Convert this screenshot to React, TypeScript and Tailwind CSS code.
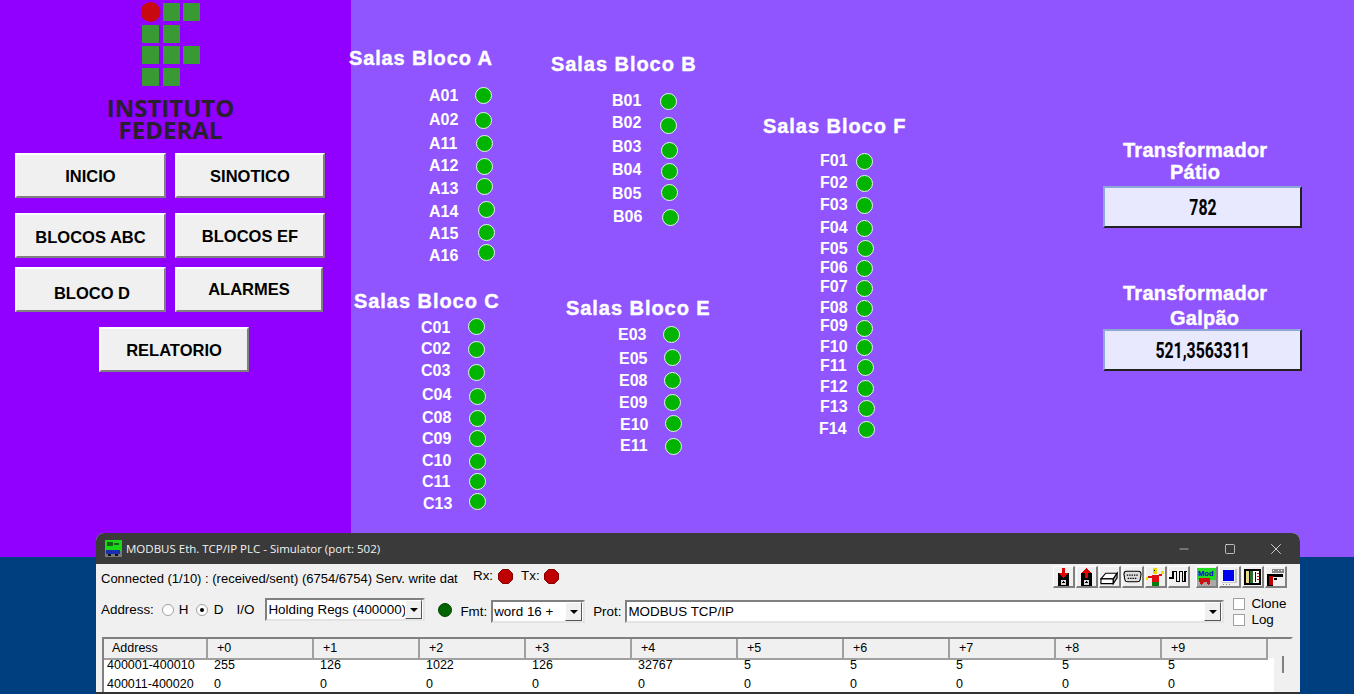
import { Minus, Square, X } from 'lucide-react'

type Row = [string, number, number, number, number]

const titles: [string, number, number, string][] = [
    ['Salas Bloco A', 349, 58, 'tracking-[0.85px]'],
    ['Salas Bloco B', 551, 64, 'tracking-[0.95px]'],
    ['Salas Bloco C', 354, 301, 'tracking-[0.95px]'],
    ['Salas Bloco E', 566, 308, 'tracking-[0.95px]'],
    ['Salas Bloco F', 763, 126, 'tracking-[0.95px]'],
    ['Transformador', 1123, 150, 'tracking-[0.25px]'],
    ['Pátio', 1170, 172, 'tracking-[0.25px]'],
    ['Transformador', 1123, 293, 'tracking-[0.25px]'],
    ['Galpão', 1170, 318, 'tracking-[0.25px]'],
]

// label x, label y, led x, led y
const rooms: Row[] = [
    ['A01', 429, 95, 483, 95],
    ['A02', 429, 119, 483, 120],
    ['A11', 429, 143, 484, 143],
    ['A12', 429, 165, 484, 166],
    ['A13', 429, 188, 484, 186],
    ['A14', 429, 211, 486, 209],
    ['A15', 429, 233, 486, 232],
    ['A16', 429, 255, 486, 252],
    ['B01', 612, 100, 668, 101],
    ['B02', 612, 122, 668, 125],
    ['B03', 612, 146, 669, 150],
    ['B04', 612, 169, 669, 171],
    ['B05', 612, 193, 669, 192],
    ['B06', 613, 216, 670, 217],
    ['C01', 421, 327, 476, 326],
    ['C02', 421, 348, 476, 349],
    ['C03', 421, 370, 476, 372],
    ['C04', 422, 394, 477, 396],
    ['C08', 422, 417, 477, 418],
    ['C09', 422, 438, 477, 438],
    ['C10', 422, 460, 477, 461],
    ['C11', 422, 481, 477, 481],
    ['C13', 423, 503, 477, 501],
    ['E03', 618, 334, 671, 334],
    ['E05', 619, 358, 672, 357],
    ['E08', 619, 380, 672, 380],
    ['E09', 619, 402, 672, 402],
    ['E10', 620, 424, 673, 423],
    ['E11', 620, 445, 673, 446],
    ['F01', 820, 160, 864, 161],
    ['F02', 820, 182, 864, 183],
    ['F03', 820, 204, 864, 205],
    ['F04', 820, 227, 864, 228],
    ['F05', 820, 248, 865, 248],
    ['F06', 820, 267, 864, 268],
    ['F07', 820, 286, 864, 288],
    ['F08', 820, 307, 864, 308],
    ['F09', 820, 325, 864, 328],
    ['F10', 820, 346, 864, 347],
    ['F11', 820, 365, 865, 367],
    ['F12', 820, 386, 865, 388],
    ['F13', 820, 406, 866, 408],
    ['F14', 819, 428, 866, 429],
]

const tableRows = [
    ['400001-400010', '255', '126', '1022', '126', '32767', '5', '5', '5', '5', '5'],
    ['400011-400020', '0', '0', '0', '0', '0', '0', '0', '0', '0', '0'],
]

function NavButton({ label, className }: { label: string; className: string }) {
    return (
        <button className={`h-[45px] shrink-0 bg-[#f0f0f0] border-2 border-t-white border-l-white border-r-[#808080] border-b-[#808080] font-['Liberation_Sans',Arial,sans-serif] text-[16.5px] font-bold text-black flex items-center justify-center ${className}`}>
            {label}
        </button>
    )
}

function Logo() {
    return (
        <svg width="60" height="87" viewBox="0 0 60 87" className="ml-[141px] shrink-0">
            <g fill="#399a33">
                <rect x="22" y="3" width="17" height="18" rx="1" />
                <rect x="42" y="3" width="17" height="18" rx="1" />
                <rect x="1" y="25" width="17" height="18" rx="1" />
                <rect x="22" y="25" width="17" height="18" rx="1" />
                <rect x="1" y="46" width="17" height="18" rx="1" />
                <rect x="22" y="46" width="17" height="18" rx="1" />
                <rect x="42" y="46" width="17" height="18" rx="1" />
                <rect x="1" y="68" width="17" height="18" rx="1" />
                <rect x="22" y="68" width="17" height="18" rx="1" />
            </g>
            <circle cx="9.5" cy="12" r="10" fill="#c8090f" />
        </svg>
    )
}

function Sidebar() {
    return (
        <aside className="w-[351px] shrink-0 bg-[#9100ff] flex flex-col">
            <Logo />
            <div className="mt-[10px] w-[341px] h-[44px] text-center font-['Open_Sans',sans-serif] font-bold text-[24px] leading-[22px] text-[#2a1f2e]">
                INSTITUTO<br />FEDERAL
            </div>
            <div className="mt-[12px] pl-[15px] flex gap-[9px]">
                <NavButton label="INICIO" className="w-[151px] pt-[2px]" />
                <NavButton label="SINOTICO" className="w-[150px] pt-[2px]" />
            </div>
            <div className="mt-[15px] pl-[15px] flex gap-[9px]">
                <NavButton label="BLOCOS ABC" className="w-[151px] pt-[4px]" />
                <NavButton label="BLOCOS EF" className="w-[150px] pt-[2px]" />
            </div>
            <div className="mt-[9px] pl-[15px] flex gap-[9px]">
                <NavButton label="BLOCO D" className="w-[151px] pt-[8px] pl-[3px]" />
                <NavButton label="ALARMES" className="w-[148px]" />
            </div>
            <div className="mt-[15px] pl-[99px] flex">
                <NavButton label="RELATORIO" className="w-[150px] pt-[2px]" />
            </div>
        </aside>
    )
}

function ValueBox({ value, className }: { value: string; className: string }) {
    return (
        <div className={`absolute left-[752px] w-[199px] h-[42px] bg-[#e8e8ff] border-2 border-t-[#8ea6d8] border-l-[#8ea6d8] border-r-[#222] border-b-[#222] flex items-center justify-center ${className}`}>
            <span className="font-['Roboto',sans-serif] font-bold text-[22px] leading-[26px] pt-[1px] text-black scale-x-[0.72]">{value}</span>
        </div>
    )
}

function Canvas() {
    return (
        <main className="relative flex-1 bg-[#9155ff] font-['Liberation_Sans',Arial,sans-serif] font-bold text-white">
            {titles.map(([text, x, y, track]) => (
                <span
                    key={text + y}
                    className={`absolute text-[20px] leading-[24px] whitespace-nowrap [-webkit-text-stroke:0.4px_white] ${track}`}
                    style={{ left: x - 351, top: y - 12 }}
                >
                    {text}
                </span>
            ))}
            {rooms.map(([name, lx, ly, dx, dy]) => (
                <div key={name}>
                    <span className="absolute text-[16px] leading-[18px]" style={{ left: lx - 351, top: ly - 8 }}>
                        {name}
                    </span>
                    <span
                        className="absolute w-[17px] h-[17px] rounded-full bg-[#00b400] border border-[#e6f5e6]"
                        style={{ left: dx - 351 - 8, top: dy - 8 }}
                    />
                </div>
            ))}
            <ValueBox value="782" className="top-[186px]" />
            <ValueBox value="521,3563311" className="top-[329px]" />
        </main>
    )
}

function ToolIcon({ n }: { n: number }) {
    const common = { width: 20, height: 18, viewBox: '0 0 20 18', shapeRendering: 'crispEdges' as const }
    if (n === 0 || n === 1) {
        return (
            <svg {...common}>
                <path d="M4 5h12v13H4z" fill="#000" />
                <path d="M7 12h6v5H7z" fill="#ddd" />
                <circle cx="10" cy="14.5" r="1.2" fill="#000" />
                {n === 0 ? (
                    <path d="M8 0h4v5h3l-5 5-5-5h3z" fill="#e00000" />
                ) : (
                    <path d="M10 0l5 5h-3v5H8V5H5z" fill="#e00000" />
                )}
            </svg>
        )
    }
    if (n === 2) {
        return (
            <svg {...common} shapeRendering="auto">
                <path d="M1 11l5-6h12l-4 6z" fill="#fff" stroke="#000" strokeWidth="1.2" />
                <path d="M1 11h13v5H1z" fill="#fff" stroke="#000" strokeWidth="1.2" />
                <path d="M14 11l4-6v5l-4 6z" fill="#aaa" stroke="#000" strokeWidth="1.2" />
            </svg>
        )
    }
    if (n === 3) {
        return (
            <svg {...common} shapeRendering="auto">
                <path d="M1 6q0-3 3-3h12q3 0 3 3l-1 6q-.5 2-3 2H5q-2.500 0-3-2z" fill="#ddd" stroke="#000" strokeWidth="1.1" />
                <path d="M4 7h12M5 10.500h10" stroke="#000" strokeWidth="1.200" strokeDasharray="1.500 1" />
            </svg>
        )
    }
    if (n === 4) {
        return (
            <svg {...common}>
                <path d="M7 0h5v6H7z" fill="#e8d800" />
                <path d="M8 2h1v1H8zM10 2h1v1h-1z" fill="#000" />
                <path d="M6 7h8v7H6z" fill="#e01010" />
                <path d="M2 8h4v2H2zM14 6h3v2h-3z" fill="#e01010" />
                <path d="M0 9h2v3H0zM16 3h3v3h-3z" fill="#f0e000" />
                <path d="M6 14h8v4H6z" fill="#0a7a0a" />
            </svg>
        )
    }
    if (n === 5) {
        return (
            <svg {...common}>
                <path d="M0 10h4V3h4v11h3V3h3v11h3V3h2" fill="none" stroke="#000" strokeWidth="1.500" />
            </svg>
        )
    }
    if (n === 6) {
        return (
            <svg {...common}>
                <path d="M0 0h20v12H0z" fill="#22dd22" />
                <path d="M0 12h20v6H0z" fill="#aaa" />
                <text x="1" y="8" fontSize="8" fontWeight="700" fill="#0000d0" fontFamily="Liberation Sans">Mod</text>
                <path d="M2 10h12v4H2z" fill="#d01010" />
                <circle cx="5" cy="15" r="2" fill="#d01010" />
                <circle cx="12" cy="15" r="2" fill="#d01010" />
            </svg>
        )
    }
    if (n === 7) {
        return (
            <svg {...common}>
                <path d="M3 2h12v11H3z" fill="#0000f0" />
                <path d="M16 1h2v13h-2zM2 14h16v1H2z" fill="#c8c8c8" />
                <path d="M3 16h1v1H3zM6 16h1v1H6zM9 16h1v1H9z" fill="#888" />
            </svg>
        )
    }
    if (n === 8) {
        return (
            <svg {...common}>
                <path d="M1 1h18v16H1z" fill="#000" />
                <path d="M3 3h3v12H3z" fill="#e8d890" />
                <path d="M7 3h3v12H7z" fill="#2f6b2f" />
                <path d="M11 3h6v12h-6z" fill="#fff" />
                <path d="M13 4v10" stroke="#000" />
                <path d="M15 5h2v1h-2zM15 8h2v1h-2zM15 11h2v1h-2z" fill="#e01010" />
            </svg>
        )
    }
    return (
        <svg {...common}>
            <path d="M6 1h13v4H6z" fill="#888" />
            <path d="M7 2h1v1H7zM10 2h1v1h-1zM13 2h1v1h-1zM16 2h1v1h-1z" fill="#fff" />
            <path d="M1 6h17v3H7v9H1z" fill="#000" />
            <path d="M3 8h4v9H3z" fill="#c00000" />
            <path d="M8 10h4v2H8z" fill="#000" />
        </svg>
    )
}

function ToolButton({ n }: { n: number }) {
    return (
        <div className="w-[22px] h-[22px] bg-[#f0f0f0] border border-t-white border-l-white border-r-[#808080] border-b-[#808080] border-b-2 border-r-2 flex items-center justify-center overflow-hidden">
            <ToolIcon n={n} />
        </div>
    )
}

function DropArrow() {
    return (
        <div className="w-[17px] shrink-0 self-stretch bg-[#f0f0f0] border border-t-white border-l-white border-r-[#555] border-b-[#555] flex items-center justify-center">
            <div className="w-0 h-0 border-x-[4px] border-x-transparent border-t-[4px] border-t-black" />
        </div>
    )
}

function Select({ value, className }: { value: string; className: string }) {
    return (
        <div className={`flex h-[23px] bg-white border-2 border-t-[#808080] border-l-[#808080] border-r-[#e4e4e4] border-b-[#e4e4e4] pr-[1px] ${className}`}>
            <span className="flex-1 min-w-0 px-[1px] leading-[19px] whitespace-nowrap overflow-hidden">{value}</span>
            <DropArrow />
        </div>
    )
}

function Radio({ checked }: { checked?: boolean }) {
    return (
        <span className="w-[12px] h-[12px] rounded-full bg-white border border-[#a0a0a0] flex items-center justify-center">
            {checked && <span className="w-[4px] h-[4px] rounded-full bg-black" />}
        </span>
    )
}

function Octagon() {
    return (
        <svg width="15" height="15" viewBox="0 0 15 15" className="block">
            <path d="M4.500 0.500h6l4 4v6l-4 4h-6l-4-4v-6z" fill="#c00000" stroke="#800000" />
        </svg>
    )
}

function SimulatorWindow() {
    return (
        <section className="absolute left-[96px] top-[533px] w-[1204px] h-[161px] rounded-t-[8px] overflow-hidden flex flex-col bg-[#f0f0f0] border-b-2 border-[#333] font-['Liberation_Sans',Arial,sans-serif] text-[13.4px] text-black">
            <header className="h-[31px] shrink-0 bg-[#3a3a3a] flex items-center text-white">
                <svg width="17" height="17" viewBox="0 0 17 17" className="ml-[9px]" shapeRendering="crispEdges">
                    <path d="M0 0h17v11H0z" fill="#18d818" />
                    <path d="M0 11h17v6H0z" fill="#777" />
                    <path d="M2 2h6v4H2zM9 3h5v2H9z" fill="#156015" />
                    <path d="M1 10h14v4H1z" fill="#1830b0" />
                    <path d="M3 14h3v2H3zM10 14h3v2h-3z" fill="#111" />
                </svg>
                <span className="ml-[4px] font-['Open_Sans',sans-serif] text-[11.5px] leading-none text-[#f2f2f2]">MODBUS Eth. TCP/IP PLC - Simulator (port: 502)</span>
                <div className="ml-auto flex items-center pr-[1px] text-white">
                    <span className="w-[46px] flex justify-center"><Minus size={14} strokeWidth={1} /></span>
                    <span className="w-[46px] flex justify-center"><Square size={12} strokeWidth={1.300} /></span>
                    <span className="w-[46px] flex justify-center"><X size={18} strokeWidth={1} /></span>
                </div>
            </header>

            <div className="h-[26px] shrink-0 flex items-center pl-[5px] pr-[13px]">
                <span className="whitespace-nowrap w-[372px] text-[13px] pt-[3px]">Connected (1/10) : (received/sent) (6754/6754) Serv. write dat</span>
                <span className="-mt-[2px]">Rx:</span>
                <span className="ml-[5px] -mt-[2px]"><Octagon /></span>
                <span className="ml-[8px] -mt-[2px]">Tx:</span>
                <span className="ml-[4px] -mt-[2px]"><Octagon /></span>
                <div className="ml-auto flex">
                    <div className="flex gap-[1px]">
                        {[0, 1, 2, 3, 4, 5].map((n) => <ToolButton key={n} n={n} />)}
                    </div>
                    <div className="ml-[6px] flex gap-[1px]">
                        {[6, 7, 8, 9].map((n) => <ToolButton key={n} n={n} />)}
                    </div>
                </div>
            </div>

            <div className="h-[47px] shrink-0 flex items-start pt-[8px] pl-[5px] relative">
                <span className="leading-[23px]">Address:</span>
                <span className="ml-[8px] mt-[6px]"><Radio /></span>
                <span className="ml-[1px] w-[21px] pl-[4px] leading-[23px]">H</span>
                <span className="mt-[6px]"><Radio checked /></span>
                <span className="ml-[6px] leading-[23px]">D</span>
                <span className="ml-[13px] leading-[23px]">I/O</span>
                <Select value="Holding Regs (400000)" className="ml-[11px] w-[160px]" />
                <span className="ml-[13px] mt-[5px] w-[14px] h-[14px] rounded-full bg-[#006400] border border-[#004400]" />
                <span className="ml-[8px] leading-[23px] mt-[2px]">Fmt:</span>
                <Select value="word 16 +" className="ml-[4px] w-[94px] mt-[2px]" />
                <span className="ml-[8px] leading-[23px] mt-[2px]">Prot:</span>
                <Select value="MODBUS TCP/IP" className="ml-[4px] w-[599px] mt-[2px]" />
                <div className="ml-[9px] flex flex-col gap-[4px]">
                    <label className="flex items-center gap-[6px] leading-[12px]"><span className="w-[12px] h-[12px] bg-white border border-[#a0a0a0]" />Clone</label>
                    <label className="flex items-center gap-[6px] leading-[12px]"><span className="w-[12px] h-[12px] bg-white border border-[#a0a0a0]" />Log</label>
                </div>
            </div>

            <div className="ml-[6px] mr-[7px] flex-1 min-h-0 bg-white border-2 border-b-0 border-t-[#808080] border-l-[#808080] border-r-[#f0f0f0] flex overflow-hidden text-[12.5px]">
                <div className="flex-1 min-w-0">
                    <div className="h-[19px] grid grid-cols-[104px_repeat(10,106px)] bg-[#f0f0f0]">
                        <div className="border-r-2 border-b-2 border-[#a0a0a0] pl-[8px] leading-[19px]">Address</div>
                        {[0, 1, 2, 3, 4, 5, 6, 7, 8, 9].map((n) => (
                            <div key={n} className="border-r-2 border-b-2 border-[#a0a0a0] pl-[9px] leading-[19px]">+{n}</div>
                        ))}
                    </div>
                    {tableRows.map((row) => (
                        <div key={row[0]} className="h-[19px] grid grid-cols-[104px_repeat(10,106px)] leading-[15px]">
                            {row.map((cell, i) => (
                                <span key={i} className={i === 0 ? 'pl-[3px]' : 'pl-[6px]'}>{cell}</span>
                            ))}
                        </div>
                    ))}
                </div>
                <div className="w-[17px] shrink-0 bg-[#f0f0f0] flex justify-center">
                    <div className="mt-[17px] w-[2px] h-[17px] bg-[#808080]" />
                </div>
            </div>
        </section>
    )
}

export default function App() {
    return (
        <div className="relative w-[1354px] h-[694px] overflow-hidden flex flex-col bg-[#003f7f]">
            <div className="h-[557px] shrink-0 flex">
                <Sidebar />
                <Canvas />
            </div>
            <SimulatorWindow />
        </div>
    )
}
